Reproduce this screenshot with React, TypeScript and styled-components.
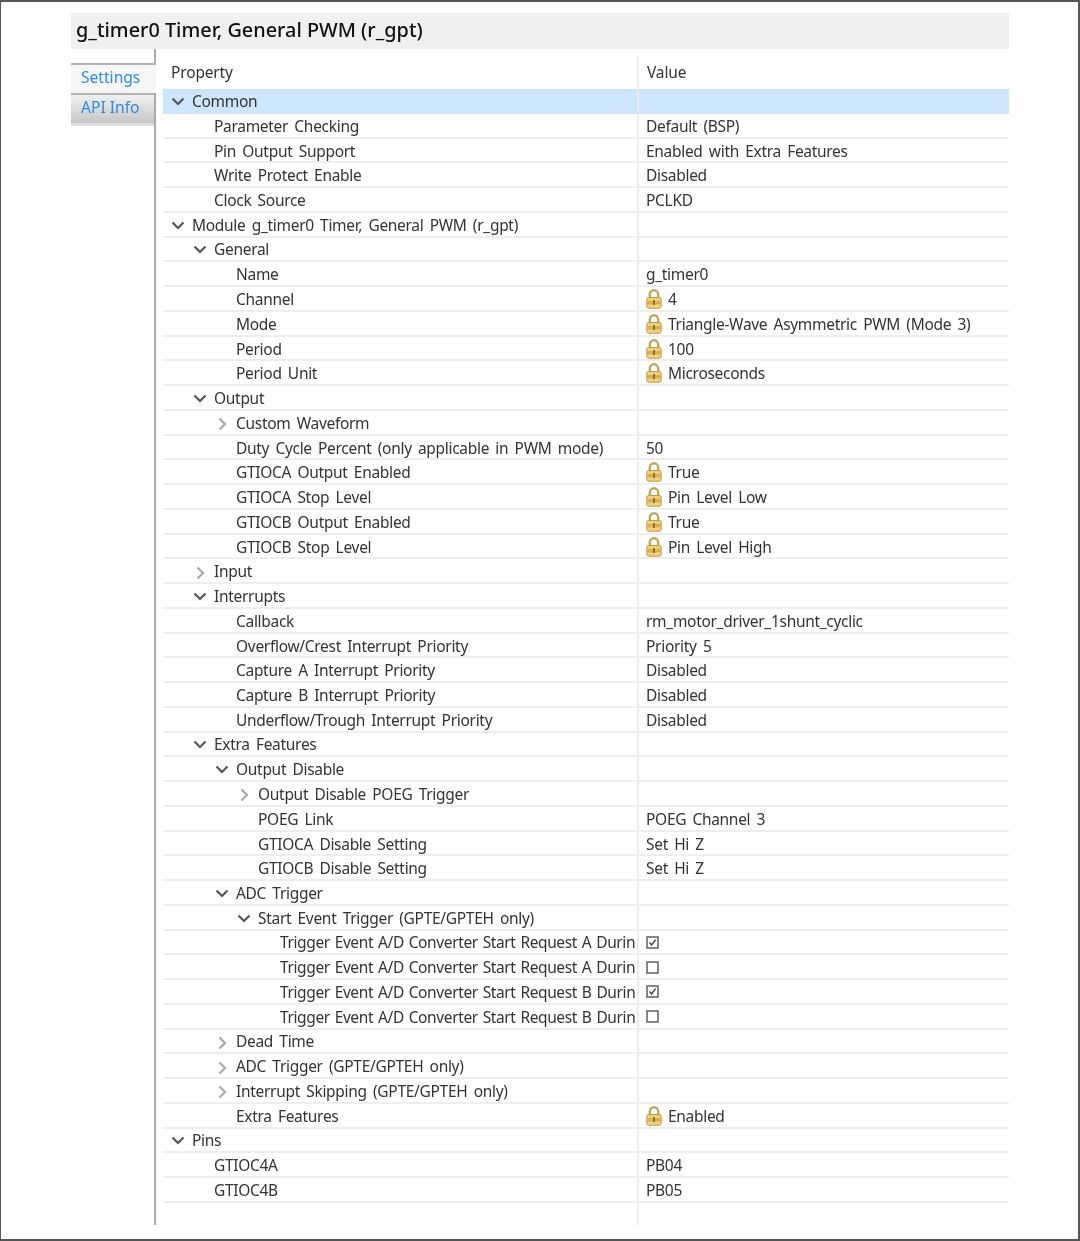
import React from 'react';
import styled, {createGlobalStyle} from 'styled-components';

type Row = {
    label: string;
    level: number;
    open?: boolean;
    value?: string;
    locked?: boolean;
    checked?: boolean;
    selected?: boolean;
};

const REQUEST = 'Trigger Event A/D Converter Start Request';

const rows: Row[] = [
    {label: 'Common', level: 0, open: true, selected: true},
    {label: 'Parameter Checking', level: 1, value: 'Default (BSP)'},
    {label: 'Pin Output Support', level: 1, value: 'Enabled with Extra Features'},
    {label: 'Write Protect Enable', level: 1, value: 'Disabled'},
    {label: 'Clock Source', level: 1, value: 'PCLKD'},
    {label: 'Module g_timer0 Timer, General PWM (r_gpt)', level: 0, open: true},
    {label: 'General', level: 1, open: true},
    {label: 'Name', level: 2, value: 'g_timer0'},
    {label: 'Channel', level: 2, value: '4', locked: true},
    {label: 'Mode', level: 2, value: 'Triangle-Wave Asymmetric PWM (Mode 3)', locked: true},
    {label: 'Period', level: 2, value: '100', locked: true},
    {label: 'Period Unit', level: 2, value: 'Microseconds', locked: true},
    {label: 'Output', level: 1, open: true},
    {label: 'Custom Waveform', level: 2, open: false},
    {label: 'Duty Cycle Percent (only applicable in PWM mode)', level: 2, value: '50'},
    {label: 'GTIOCA Output Enabled', level: 2, value: 'True', locked: true},
    {label: 'GTIOCA Stop Level', level: 2, value: 'Pin Level Low', locked: true},
    {label: 'GTIOCB Output Enabled', level: 2, value: 'True', locked: true},
    {label: 'GTIOCB Stop Level', level: 2, value: 'Pin Level High', locked: true},
    {label: 'Input', level: 1, open: false},
    {label: 'Interrupts', level: 1, open: true},
    {label: 'Callback', level: 2, value: 'rm_motor_driver_1shunt_cyclic'},
    {label: 'Overflow/Crest Interrupt Priority', level: 2, value: 'Priority 5'},
    {label: 'Capture A Interrupt Priority', level: 2, value: 'Disabled'},
    {label: 'Capture B Interrupt Priority', level: 2, value: 'Disabled'},
    {label: 'Underflow/Trough Interrupt Priority', level: 2, value: 'Disabled'},
    {label: 'Extra Features', level: 1, open: true},
    {label: 'Output Disable', level: 2, open: true},
    {label: 'Output Disable POEG Trigger', level: 3, open: false},
    {label: 'POEG Link', level: 3, value: 'POEG Channel 3'},
    {label: 'GTIOCA Disable Setting', level: 3, value: 'Set Hi Z'},
    {label: 'GTIOCB Disable Setting', level: 3, value: 'Set Hi Z'},
    {label: 'ADC Trigger', level: 2, open: true},
    {label: 'Start Event Trigger (GPTE/GPTEH only)', level: 3, open: true},
    {label: `${REQUEST} A Durin`, level: 4, checked: true},
    {label: `${REQUEST} A Durin`, level: 4, checked: false},
    {label: `${REQUEST} B Durin`, level: 4, checked: true},
    {label: `${REQUEST} B Durin`, level: 4, checked: false},
    {label: 'Dead Time', level: 2, open: false},
    {label: 'ADC Trigger (GPTE/GPTEH only)', level: 2, open: false},
    {label: 'Interrupt Skipping (GPTE/GPTEH only)', level: 2, open: false},
    {label: 'Extra Features', level: 2, value: 'Enabled', locked: true},
    {label: 'Pins', level: 0, open: true},
    {label: 'GTIOC4A', level: 1, value: 'PB04'},
    {label: 'GTIOC4B', level: 1, value: 'PB05'}
];

const Chevron = ({open}: {open: boolean}) => (
    <ArrowSlot open={open}>
        {open ? (
            <svg width='14' height='9' viewBox='0 0 14 9'>
                <path d='M1.5 1.5 L7 7 L12.5 1.5' fill='none' stroke='#555' strokeWidth='2.2' />
            </svg>
        ) : (
            <svg width='9' height='14' viewBox='0 0 9 14'>
                <path d='M1.5 1.5 L7 7 L1.5 12.5' fill='none' stroke='#aaa' strokeWidth='2.2' />
            </svg>
        )}
    </ArrowSlot>
);

const Lock = () => (
    <LockIcon width='16' height='20' viewBox='0 0 16 20'>
        <path d='M3.8 9 V5.5 a4.2 4.2 0 0 1 8.4 0 V9' fill='none' stroke='#bfa660' strokeWidth='2.4' />
        <rect x='0.8' y='8.5' width='14.4' height='10.7' rx='1.8' fill='#efcf80' stroke='#c09a48' />
        <rect x='1.5' y='12' width='13' height='3.4' fill='#d9ae55' />
        <rect x='7' y='11' width='2' height='5' fill='#8d7235' />
    </LockIcon>
);

const Check = ({checked}: {checked: boolean}) => (
    <CheckBox width='13' height='13' viewBox='0 0 13 13'>
        <rect x='1' y='1' width='11' height='11' fill='#fff' stroke='#555' strokeWidth='1.4' />
        {checked && <path d='M3.5 6.5 L5.6 9 L9.6 3.6' fill='none' stroke='#333' strokeWidth='1.3' />}
    </CheckBox>
);

const App = () => (
    <>
        <GlobalStyle />
        <Frame>
            <Title>g_timer0 Timer, General PWM (r_gpt)</Title>
            <Body>
                <Tabs>
                    <Tab active>Settings</Tab>
                    <Tab>API Info</Tab>
                </Tabs>
                <Table>
                    <Header>
                        <HeaderCell>Property</HeaderCell>
                        <HeaderCell>Value</HeaderCell>
                    </Header>
                    {rows.map((row, i) => (
                        <TableRow key={i} selected={row.selected}>
                            <PropertyCell level={row.level}>
                                {row.open !== undefined && <Chevron open={row.open} />}
                                <Label tight={row.checked !== undefined}>{row.label}</Label>
                            </PropertyCell>
                            <ValueCell>
                                {row.locked && <Lock />}
                                {row.checked !== undefined && <Check checked={row.checked} />}
                                {row.value}
                            </ValueCell>
                        </TableRow>
                    ))}
                    <Filler />
                </Table>
            </Body>
        </Frame>
    </>
);

export default App;

const GlobalStyle = createGlobalStyle`
    html, body {
        margin: 0;
        background: #fff;
    }
`;

const Frame = styled.div`
    box-sizing: border-box;
    width: 1080px;
    height: 1241px;
    padding: 11px 70px 0;
    border: solid #555;
    border-width: 2px 2px 2px 1px;
    font-family: 'Noto Sans', sans-serif;
    color: #333;
    background: #fff;
    filter: blur(0.3px);
`;

const Title = styled.div`
    box-sizing: border-box;
    width: 938px;
    height: 36px;
    padding-left: 5px;
    background: #f0f0f0;
    color: #111;
    font-size: 19.85px;
    font-weight: 500;
    line-height: 33px;
    white-space: nowrap;
`;

const Body = styled.div`
    display: flex;
    width: 938px;
    height: 1176px;
`;

const Tabs = styled.div`
    box-sizing: border-box;
    width: 85px;
    flex: none;
    padding-top: 14px;
    border-right: 2px solid #aaa;
`;

const Tab = styled.div<{active?: boolean}>`
    box-sizing: border-box;
    height: ${({active}) => (active ? 30 : 33)}px;
    padding-left: 10px;
    margin-right: ${({active}) => (active ? -2 : 0)}px;
    color: #2f8ae6;
    font-size: 15.6px;
    line-height: 25px;
    border-top: 2px solid #b4b4b4;
    border-bottom: ${({active}) => (active ? 'none' : '3px solid #ddd')};
    background: ${({active}) => (active ? '#f6f6f6' : 'linear-gradient(#f0f0f0, #c6c6c6)')};
`;

const Table = styled.div`
    display: flex;
    flex-direction: column;
    width: 846px;
    margin: 7px 0 0 7px;
`;

const Header = styled.div`
    display: grid;
    grid-template-columns: 476px 1fr;
    height: 33px;
    flex: none;
`;

const HeaderCell = styled.div`
    box-sizing: border-box;
    padding-left: 8px;
    font-size: 15.5px;
    letter-spacing: -0.15px;
    line-height: 32px;

    &:first-child {
        border-right: 2px solid #ececec;
    }
`;

const TableRow = styled.div<{selected?: boolean}>`
    box-sizing: border-box;
    display: grid;
    grid-template-columns: 476px 1fr;
    height: 24.75px;
    flex: none;
    font-size: 15.5px;
    letter-spacing: -0.3px;
    word-spacing: 2.5px;
    line-height: 22px;
    padding-top: 1px;
    border-bottom: 2px solid ${({selected}) => (selected ? '#cde6fc' : '#eeeeee')};
    background: ${({selected}) => (selected ? '#cde6fc' : 'transparent')};
`;

const PropertyCell = styled.div<{level: number}>`
    box-sizing: border-box;
    position: relative;
    display: flex;
    align-items: center;
    margin-top: -1px;
    padding-top: 1px;
    padding-left: ${({level}) => 29 + level * 22}px;
    overflow: hidden;
    white-space: nowrap;
    border-right: 2px solid #ececec;
`;

const ArrowSlot = styled.span<{open: boolean}>`
    position: absolute;
    display: flex;
    justify-content: center;
    width: 14px;
    margin-left: -21px;
    margin-top: ${({open}) => (open ? 1 : 3)}px;
`;

const Label = styled.span<{tight?: boolean}>`
    white-space: nowrap;
    ${({tight}) => tight && 'letter-spacing: -0.38px; word-spacing: 1.2px;'}
`;

const ValueCell = styled.div`
    display: flex;
    align-items: center;
    padding-left: 7px;
    white-space: nowrap;
`;

const LockIcon = styled.svg`
    flex: none;
    margin-right: 6px;
`;

const CheckBox = styled.svg`
    flex: none;
`;

const Filler = styled.div`
    flex: 1;
    width: 476px;
    box-sizing: border-box;
    border-right: 2px solid #ececec;
`;
